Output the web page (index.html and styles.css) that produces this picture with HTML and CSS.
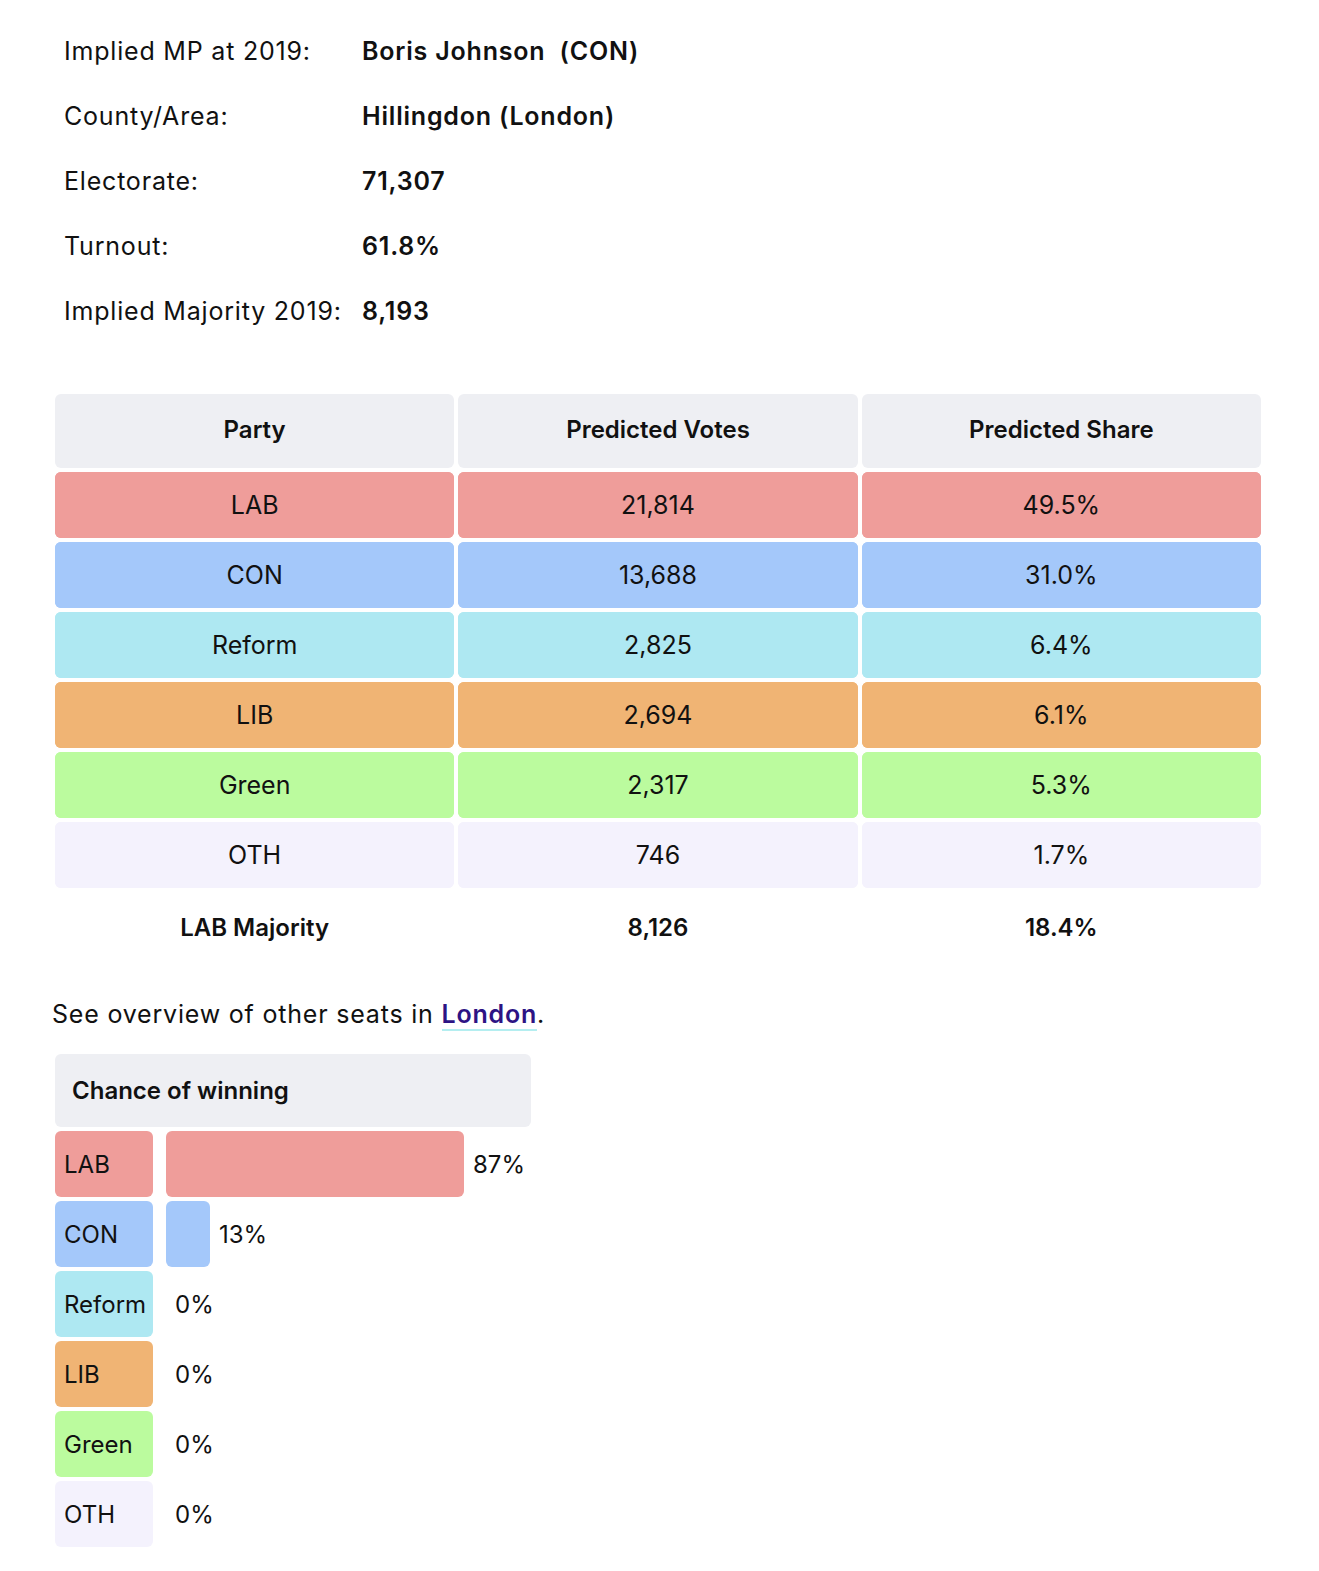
FILE: index.html
```html
<!DOCTYPE html>
<html lang="en">
<head>
<meta charset="utf-8">
<title>Uxbridge and South Ruislip</title>
<link rel="stylesheet" href="styles.css">
</head>
<body>
<div class="page">
  <div class="info">
    <div class="info-row"><span class="info-label">Implied MP at 2019:</span><span class="info-value">Boris Johnson&nbsp; (CON)</span></div>
    <div class="info-row"><span class="info-label">County/Area:</span><span class="info-value">Hillingdon (London)</span></div>
    <div class="info-row"><span class="info-label">Electorate:</span><span class="info-value">71,307</span></div>
    <div class="info-row"><span class="info-label">Turnout:</span><span class="info-value">61.8%</span></div>
    <div class="info-row"><span class="info-label">Implied Majority 2019:</span><span class="info-value">8,193</span></div>
  </div>

  <table class="results">
    <thead>
      <tr><th>Party</th><th>Predicted Votes</th><th>Predicted Share</th></tr>
    </thead>
    <tbody>
      <tr class="lab"><td>LAB</td><td>21,814</td><td>49.5%</td></tr>
      <tr class="con"><td>CON</td><td>13,688</td><td>31.0%</td></tr>
      <tr class="ref"><td>Reform</td><td>2,825</td><td>6.4%</td></tr>
      <tr class="lib"><td>LIB</td><td>2,694</td><td>6.1%</td></tr>
      <tr class="grn"><td>Green</td><td>2,317</td><td>5.3%</td></tr>
      <tr class="oth"><td>OTH</td><td>746</td><td>1.7%</td></tr>
      <tr class="maj"><td>LAB Majority</td><td>8,126</td><td>18.4%</td></tr>
    </tbody>
  </table>

  <p class="overview">See overview of other seats in <a href="#" class="area-link">London</a>.</p>

  <div class="chance">
    <div class="chance-head">Chance of winning</div>
    <div class="chance-row"><span class="chance-label lab">LAB</span><span class="bar lab" style="width:298px"></span><span class="pct">87%</span></div>
    <div class="chance-row"><span class="chance-label con">CON</span><span class="bar con" style="width:44px"></span><span class="pct">13%</span></div>
    <div class="chance-row"><span class="chance-label ref">Reform</span><span class="bar ref" style="width:0px"></span><span class="pct">0%</span></div>
    <div class="chance-row"><span class="chance-label lib">LIB</span><span class="bar lib" style="width:0px"></span><span class="pct">0%</span></div>
    <div class="chance-row"><span class="chance-label grn">Green</span><span class="bar grn" style="width:0px"></span><span class="pct">0%</span></div>
    <div class="chance-row"><span class="chance-label oth">OTH</span><span class="bar oth" style="width:0px"></span><span class="pct">0%</span></div>
  </div>
</div>
</body>
</html>
```

FILE: styles.css
```css
html, body {
  margin: 0;
  padding: 0;
  background: #ffffff;
}

body {
  font-family: Inter, "Noto Sans", "Liberation Sans", sans-serif;
  font-size: 25px;
  letter-spacing: 0.8px;
  color: #111111;
}

.page {
  padding: 18px 51px 20px 51px;
}

.info {
  padding-left: 13px;
  display: flex;
  flex-direction: column;
}

.info-row {
  display: grid;
  grid-template-columns: 298px auto;
  height: 65px;
  align-items: center;
}

.info-value {
  font-weight: 600;
}

.results {
  margin-top: 47px;
  margin-left: 0;
  width: 1214px;
  border-collapse: separate;
  border-spacing: 4px;
  table-layout: fixed;
  font-size: 25px;
  letter-spacing: 0;
}

.results th,
.results td {
  text-align: center;
  border-radius: 6px;
  line-height: 36px;
}

.results th {
  background: #eeeff3;
  font-weight: 600;
  font-size: 24px;
  padding: 18px 10px 20px;
}

.results td {
  padding: 15px 10px;
}

.lab td, .lab { background: #ef9d9a; }
.con td, .con { background: #a4c8fa; }
.ref td, .ref { background: #aee8f2; }
.lib td, .lib { background: #f0b474; }
.grn td, .grn { background: #bbfb9e; }
.oth td, .oth { background: #f4f2fd; }

.results .maj td {
  background: transparent;
  font-weight: 600;
  font-size: 24px;
  padding: 18px 10px 16px;
}

.overview {
  margin: 30px 0 0 1px;
  line-height: 36px;
}

.area-link {
  color: #2d1384;
  font-weight: 600;
  text-decoration: none;
  border-bottom: 2px solid #b4eef0;
}

.chance {
  margin-top: 22px;
  margin-left: 4px;
  display: flex;
  flex-direction: column;
  gap: 4px;
  width: 476px;
  letter-spacing: 0;
}

.chance-head {
  background: #eeeff3;
  border-radius: 6px;
  font-weight: 600;
  font-size: 24px;
  height: 73px;
  display: flex;
  align-items: center;
  padding-left: 17px;
}

.chance-row {
  display: flex;
  align-items: center;
  height: 66px;
  font-size: 24px;
}

.chance-label {
  width: 98px;
  height: 66px;
  box-sizing: border-box;
  padding-left: 9px;
  border-radius: 6px;
  display: flex;
  align-items: center;
  white-space: nowrap;
}

.bar {
  height: 66px;
  margin-left: 13px;
  border-radius: 6px;
}

.pct {
  margin-left: 9px;
}
```
